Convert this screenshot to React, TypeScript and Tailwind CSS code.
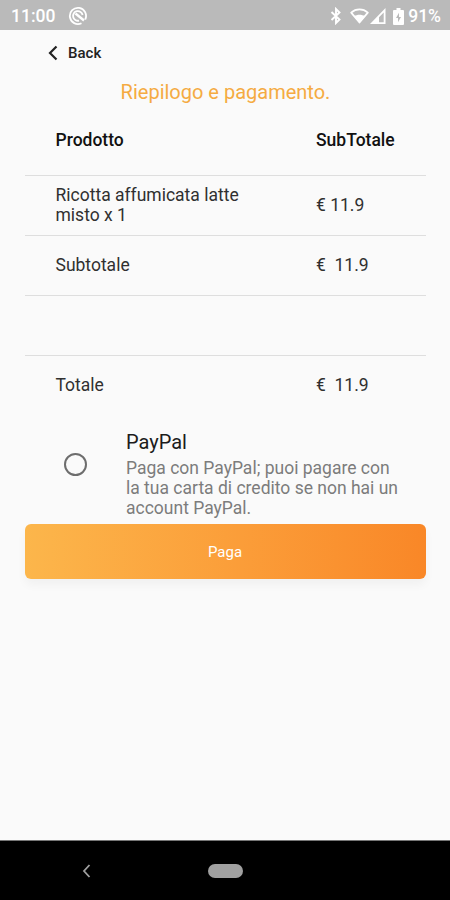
import { useState } from "react";
import clsx from "clsx";

const rows = [
  { id: "item", label: "Ricotta affumicata latte misto x 1", amount: "€ 11.9" },
  { id: "subtotal", label: "Subtotale", amount: "€  11.9" },
  { id: "spacer", label: "", amount: "" },
  { id: "total", label: "Totale", amount: "€  11.9" },
];

function StatusBar() {
  return (
    <div className="flex h-[30px] items-center bg-[#bababa] pt-[2px] pr-[9px] pl-[11px] text-white">
      <span className="w-[57px] text-[17.5px] font-medium">11:00</span>
      <svg className="h-5 w-5" viewBox="0 0 20 20" fill="none" stroke="currentColor" strokeWidth="1.8">
        <path d="M13.5 17.2A8.1 8.1 0 1 1 17.2 13.5" />
        <path d="M11 14.6A4.8 4.8 0 1 1 14.6 9" />
        <path d="M7.5 7.5l8.5 7" strokeWidth="2.4" />
      </svg>
      <div className="ml-auto flex items-center">
        <svg className="mr-[8px] h-[18px] w-3" viewBox="0 0 12 18" fill="none" stroke="currentColor" strokeWidth="1.9">
          <path d="M1.5 5l8 7.5L6 16V2l3.5 3.5-8 7.5" />
        </svg>
        <svg className="h-4 w-[19px]" viewBox="0 0 19 16">
          <path d="M1.2 4.6C6 .4 13 .4 17.8 4.6L9.5 14.5z" fill="none" stroke="currentColor" strokeWidth="1.8" strokeLinejoin="round" />
          <path d="M4 8.2c3.4-2 7.6-2 11 0L9.5 15z" fill="currentColor" />
        </svg>
        <svg className="ml-px h-4 w-4" viewBox="0 0 16 16" fill="currentColor">
          <path fillRule="evenodd" d="M15.5 0v16H0zM13.7 4.5v9.7H9V9.3z" />
        </svg>
        <svg className="mr-[4px] ml-[7px] h-[17px] w-[11px]" viewBox="0 0 11 17">
          <path fill="currentColor" fillRule="evenodd" d="M3.5 0h4v2H10a1 1 0 0 1 1 1v13a1 1 0 0 1-1 1H1a1 1 0 0 1-1-1V3a1 1 0 0 1 1-1h2.5zM6 4.8L3 10h2v4.2L8 9H6z" />
        </svg>
        <span className="text-[17.5px] font-medium">91%</span>
      </div>
    </div>
  );
}

function SummaryTable() {
  return (
    <div className="mr-[24px] ml-[25px] text-[17.5px] leading-5 text-[#303030]">
      <div className="flex h-[70px] items-center pb-px pl-[30.5px] font-medium text-[#111111]">
        <span className="w-[260.5px]">Prodotto</span>
        <span>SubTotale</span>
      </div>
      {rows.map((row) => (
        <div key={row.id} className="flex h-[60px] items-center border-t border-[#dedede] pb-[2px] pl-[30.5px]">
          <div className="w-[260.5px] pr-[60px]">{row.label}</div>
          <div className="whitespace-pre">{row.amount}</div>
        </div>
      ))}
    </div>
  );
}

export default function App() {
  const [selected, setSelected] = useState(false);

  return (
    <div className="flex h-[900px] w-[450px] flex-col bg-[#fafafa] font-[Roboto,sans-serif]">
      <StatusBar />

      <div className="flex h-[46px] items-center pl-[48px]">
        <button className="flex items-center text-[15px] font-medium text-[#222222]">
          <svg className="mr-[10px] h-4 w-[10px]" viewBox="0 0 10 16" fill="none" stroke="currentColor" strokeWidth="2.2">
            <path d="M8.5 1.5L2 8l6.5 6.5" />
          </svg>
          Back
        </button>
      </div>

      <h1 className="h-[29px] pl-px text-center text-[20px] leading-[33px] text-[#f5ab42]">Riepilogo e pagamento.</h1>

      <SummaryTable />

      <div className="flex h-[109px] items-start pl-[64px]">
        <button
          aria-label="PayPal"
          onClick={() => setSelected(!selected)}
          className="mt-[38px] flex h-[23px] w-[23px] items-center justify-center rounded-full border-2 border-[#6d6d6d]"
        >
          <span className={clsx("h-3 w-3 rounded-full", selected && "bg-[#f98a2b]")} />
        </button>
        <div className="mt-[13px] ml-[39px] w-[290px]">
          <div className="h-[30px] text-[20px] leading-[28px] text-[#1c1c1c]">PayPal</div>
          <p className="text-[17.5px] leading-5 text-[#7c7c7c]">
            Paga con PayPal; puoi pagare con
            <br />
            la tua carta di credito se non hai un
            <br />
            account PayPal.
          </p>
        </div>
      </div>

      <button className="mr-[24px] ml-[25px] h-[55px] rounded-[6px] bg-linear-to-r from-[#fcb64b] to-[#f98727] pt-px pr-px text-[15px] text-white shadow-[0_6px_10px_rgba(0,0,0,0.04)]">
        Paga
      </button>

      <div className="mt-auto flex h-[60px] items-center border-t border-[#777777] bg-black pl-[82px]">
        <svg className="h-[14px] w-[9px]" viewBox="0 0 9 14" fill="none" stroke="#a0a0a0" strokeWidth="1.8">
          <path d="M7.5 1L2 7l5.5 6" />
        </svg>
        <div className="ml-[117px] h-[14px] w-[35px] rounded-full bg-[#a0a0a0]" />
      </div>
    </div>
  );
}
